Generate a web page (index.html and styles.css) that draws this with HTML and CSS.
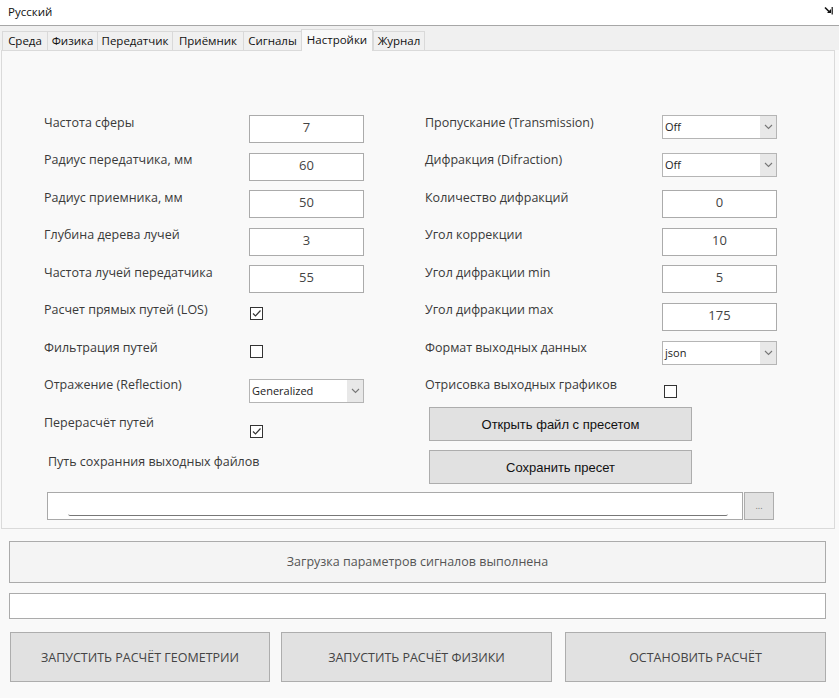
FILE: index.html
```html
<!DOCTYPE html>
<html lang="ru">
<head>
<meta charset="utf-8">
<title>Настройки</title>
<link rel="stylesheet" href="styles.css">
</head>
<body>
<div class="menubar">
  <span class="menu-item">Русский</span>
  <svg class="mdi-icon" width="9" height="9" viewBox="0 0 9 9"><path d="M1 1.5 L6 6.5" stroke="#111" stroke-width="1.6" fill="none"/><path d="M3 7 L7 7 L7 3 Z" fill="#111"/><rect x="7.6" y="1" width="1.2" height="7.5" fill="#111"/></svg>
</div>
<div class="tabs">
  <div class="tab t1">Среда</div>
  <div class="tab t2">Физика</div>
  <div class="tab t3">Передатчик</div>
  <div class="tab t4">Приёмник</div>
  <div class="tab t5">Сигналы</div>
  <div class="tab tab-active t6">Настройки</div>
  <div class="tab t7">Журнал</div>
</div>
<div class="panel">
  <div class="cols">
    <div class="col col-left">
      <div class="row"><span class="label">Частота сферы</span><div class="field">7</div></div>
      <div class="row"><span class="label">Радиус передатчика, мм</span><div class="field">60</div></div>
      <div class="row"><span class="label">Радиус приемника, мм</span><div class="field">50</div></div>
      <div class="row"><span class="label">Глубина дерева лучей</span><div class="field">3</div></div>
      <div class="row"><span class="label">Частота лучей передатчика</span><div class="field">55</div></div>
      <div class="row"><span class="label">Расчет прямых путей (LOS)</span><span class="check checked cb-a"><svg width="11" height="11" viewBox="0 0 11 11"><path d="M2 5.5 L4.5 8 L9.5 2.5" stroke="#333" stroke-width="1.2" fill="none"/></svg></span></div>
      <div class="row"><span class="label">Фильтрация путей</span><span class="check cb-b"></span></div>
      <div class="row"><span class="label">Отражение (Reflection)</span><div class="select sel-wide sel-c"><span class="sel-text">Generalized</span><span class="sel-arrow"><svg width="9" height="6" viewBox="0 0 9 6"><path d="M1 1 L4.5 4.5 L8 1" stroke="#777" stroke-width="1.1" fill="none"/></svg></span></div></div>
      <div class="row"><span class="label">Перерасчёт путей</span><span class="check checked cb-d"><svg width="11" height="11" viewBox="0 0 11 11"><path d="M2 5.5 L4.5 8 L9.5 2.5" stroke="#333" stroke-width="1.2" fill="none"/></svg></span></div>
      <div class="row row-path"><span class="label">Путь сохранния выходных файлов</span></div>
    </div>
    <div class="col col-right">
      <div class="row"><span class="label">Пропускание (Transmission)</span><div class="select"><span class="sel-text">Off</span><span class="sel-arrow"><svg width="9" height="6" viewBox="0 0 9 6"><path d="M1 1 L4.5 4.5 L8 1" stroke="#777" stroke-width="1.1" fill="none"/></svg></span></div></div>
      <div class="row"><span class="label">Дифракция (Difraction)</span><div class="select"><span class="sel-text">Off</span><span class="sel-arrow"><svg width="9" height="6" viewBox="0 0 9 6"><path d="M1 1 L4.5 4.5 L8 1" stroke="#777" stroke-width="1.1" fill="none"/></svg></span></div></div>
      <div class="row"><span class="label">Количество дифракций</span><div class="field">0</div></div>
      <div class="row"><span class="label">Угол коррекции</span><div class="field">10</div></div>
      <div class="row"><span class="label">Угол дифракции min</span><div class="field">5</div></div>
      <div class="row"><span class="label">Угол дифракции max</span><div class="field">175</div></div>
      <div class="row"><span class="label">Формат выходных данных</span><div class="select sel-c"><span class="sel-text">json</span><span class="sel-arrow"><svg width="9" height="6" viewBox="0 0 9 6"><path d="M1 1 L4.5 4.5 L8 1" stroke="#777" stroke-width="1.1" fill="none"/></svg></span></div></div>
      <div class="row row-short"><span class="label">Отрисовка выходных графиков</span><span class="check cb-e"></span></div>
      <div class="preset-buttons">
        <button class="btn-preset">Открыть файл с пресетом</button>
        <button class="btn-preset">Сохранить пресет</button>
      </div>
    </div>
  </div>
  <div class="path-row">
    <div class="path-box"><div class="path-line"></div></div>
    <button class="browse">...</button>
  </div>
</div>
<div class="bottom">
  <div class="status">Загрузка параметров сигналов выполнена</div>
  <div class="log"></div>
  <div class="actions">
    <button class="action a1">ЗАПУСТИТЬ РАСЧЁТ ГЕОМЕТРИИ</button>
    <button class="action a2">ЗАПУСТИТЬ РАСЧЁТ ФИЗИКИ</button>
    <button class="action a3">ОСТАНОВИТЬ РАСЧЁТ</button>
  </div>
</div>
</body>
</html>
```
FILE: styles.css
```css
* { box-sizing: border-box; }
html, body { margin: 0; padding: 0; }
body {
  width: 839px;
  height: 698px;
  overflow: hidden;
  background: #f9f9f9;
  font-family: "Open Sans", "Noto Sans", sans-serif;
  color: #333;
}

.menubar {
  height: 26px;
  background: #fff;
  border-bottom: 1px solid #a7a7a7;
  display: flex;
  align-items: center;
  justify-content: space-between;
  padding: 0 6px 0 8px;
}
.menu-item { font-size: 11.5px; color: #111; line-height: 16px; margin-top: -2px; }
.mdi-icon { margin-top: -4px; }

.tabs {
  height: 24px;
  background: #f0f0f0;
  display: flex;
  align-items: flex-end;
  padding-left: 2px;
}
.tab {
  height: 19px;
  font-size: 11.5px;
  line-height: 18px;
  color: #111;
  text-align: center;
  background: #f0f0f0;
  border: 1px solid #d9d9d9;
  border-bottom: none;
  border-right: none;
}
.tab-active {
  height: 22px;
  line-height: 20px;
  background: #f9f9f9;
  border-right: 1px solid #d9d9d9;
  position: relative;
  margin-bottom: -1px;
  z-index: 2;
}
.t7 { border-right: 1px solid #d9d9d9; }
.t1 { width: 45px; }
.t2 { width: 50px; }
.t3 { width: 75px; }
.t4 { width: 71px; }
.t5 { width: 58px; }
.t6 { width: 72px; }
.t7 { width: 52px; }

.panel {
  margin-left: 1px;
  width: 834px;
  height: 479px;
  background: #f9f9f9;
  border: 1px solid #dadada;
  position: relative;
}

.cols {
  display: flex;
  padding-top: 61.5px;
  height: 436.5px;
}
.col { display: flex; flex-direction: column; }
.col-left { margin-left: 42px; width: 320px; }
.col-right { margin-left: 61px; width: 353px; }

.row {
  height: 37.5px;
  display: flex;
  align-items: flex-start;
  flex-shrink: 0;
}
.label {
  font-size: 12.5px;
  line-height: 20px;
  color: #3a3a3a;
  white-space: nowrap;
}
.col-left .label { width: 205px; }
.col-right .label { width: 237px; }

.field {
  margin-top: 2.5px;
  width: 115px;
  height: 28px;
  background: #fff;
  border: 1px solid #ababab;
  font-size: 13px;
  line-height: 23px;
  text-align: center;
  color: #444;
}

.select {
  margin-top: 2.5px;
  width: 115px;
  height: 24px;
  background: #fff;
  border: 1px solid #b5b5b5;
  display: flex;
  align-items: stretch;
}
.sel-c { margin-top: 3.5px; }
.sel-text {
  flex: 1;
  font-size: 11px;
  line-height: 22px;
  padding-left: 2px;
  color: #222;
}
.sel-arrow {
  width: 16px;
  background: #e8e8e8;
  display: flex;
  align-items: center;
  justify-content: center;
}

.check {
  width: 13px;
  height: 13px;
  border: 1px solid #333;
  background: #fff;
  display: flex;
  align-items: center;
  justify-content: center;
}
.cb-a { margin-top: 7px; margin-left: 1px; }
.cb-b { margin-top: 7.5px; margin-left: 1px; }
.cb-d { margin-top: 12.5px; margin-left: 1px; }
.cb-e { margin-top: 10px; margin-left: 2px; }

.row-path { padding-top: 1.5px; }
.row-path .label { padding-left: 4px; width: auto; }
.row-short { height: 32px; }

.preset-buttons {
  display: flex;
  flex-direction: column;
  gap: 9px;
  margin-left: 4px;
}
.btn-preset {
  width: 263px;
  height: 34px;
  background: #e1e1e1;
  border: 1px solid #adadad;
  font-family: "Liberation Sans", Arial, sans-serif;
  font-size: 13px;
  color: #111;
  padding: 0;
}

.path-row {
  display: flex;
  margin-left: 45px;
  margin-top: 4px;
}
.path-box {
  width: 696px;
  height: 28px;
  background: #fff;
  border: 1px solid #a9a9a9;
  position: relative;
}
.path-line {
  position: absolute;
  left: 20px;
  right: 14px;
  top: 21px;
  height: 2px;
  border-bottom: 1px solid #777;
  border-left: 1px solid #ccc;
  border-right: 1px solid #ccc;
  border-bottom-left-radius: 2px;
  border-bottom-right-radius: 2px;
}
.browse {
  width: 30px;
  height: 28px;
  margin-left: 1px;
  background: #e1e1e1;
  border: 1px solid #adadad;
  font-size: 9px;
  color: #777;
  padding: 0;
  font-family: "Open Sans", sans-serif;
}

.bottom {
  padding: 12px 13px 0 9px;
}
.status {
  height: 42px;
  background: #f4f4f4;
  border: 1px solid #ababab;
  font-size: 12.5px;
  line-height: 40px;
  text-align: center;
  color: #555;
}
.log {
  margin-top: 10px;
  height: 26px;
  background: #fff;
  border: 1px solid #ababab;
}
.actions {
  margin-top: 13px;
  display: flex;
}
.action {
  height: 50px;
  background: #e1e1e1;
  border: 1px solid #adadad;
  font-family: "Open Sans", sans-serif;
  font-size: 12.5px;
  color: #444;
  padding: 0;
}
.a1 { width: 260px; margin-left: 1px; }
.a2 { width: 271px; margin-left: 11px; }
.a3 { width: 261px; margin-left: 13px; }
```
